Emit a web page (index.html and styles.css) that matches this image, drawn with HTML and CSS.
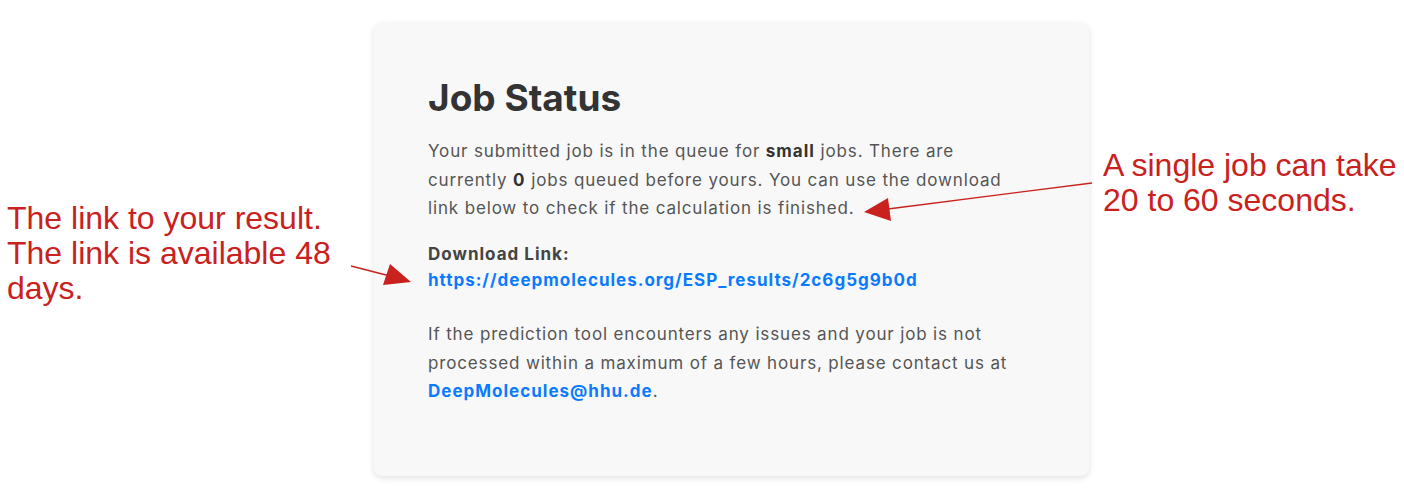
FILE: index.html
```html
<!DOCTYPE html>
<html lang="en">
<head>
<meta charset="utf-8">
<title>Job Status</title>
<link rel="stylesheet" href="styles.css">
</head>
<body>
<main class="page">
  <section class="card">
    <h1 class="title">Job Status</h1>
    <p class="text">Your submitted job is in the queue for <strong>small</strong> jobs. There are currently <strong>0</strong> jobs queued before yours. You can use the download link below to check if the calculation is finished.</p>
    <p class="download">
      <strong class="label">Download Link:</strong><br>
      <a class="link" href="#">https://deepmolecules.org/ESP_results/2c6g5g9b0d</a>
    </p>
    <p class="text">If the prediction tool encounters any issues and your job is not processed within a maximum of a few hours, please contact us at <a class="link" href="#">DeepMolecules@hhu.de</a>.</p>
  </section>
  <div class="note note-left">The link to your result.<br>The link is available 48<br>days.</div>
  <div class="note note-right">A single job can take<br>20 to 60 seconds.</div>
  <svg class="arrows" width="1404" height="493" viewBox="0 0 1404 493">
    <line x1="1092" y1="183" x2="888" y2="209" stroke="#c9211e" stroke-width="1.3"/>
    <polygon points="864,212 888,198 891,221" fill="#c9211e"/>
    <line x1="351" y1="266" x2="390" y2="276" stroke="#c9211e" stroke-width="1.3"/>
    <polygon points="411,282 390,264 383,285" fill="#c9211e"/>
  </svg>
</main>
</body>
</html>
```
FILE: styles.css
```css
* { box-sizing: border-box; }
html, body { margin: 0; padding: 0; background: #ffffff; }
.page {
  position: relative;
  width: 1404px;
  height: 493px;
  padding: 23px 0 0 374px;
}
.card {
  width: 715px;
  height: 453px;
  background: #f8f8f8;
  border-radius: 8px;
  box-shadow: 0 2px 6px rgba(0,0,0,0.12);
  padding: 55px 69px 0 54px;
  font-family: "Inter", "Open Sans", sans-serif;
  color: #555555;
  font-size: 17px;
  letter-spacing: 0.85px;
}
.title {
  margin: 0 0 19px 0;
  font-size: 37px;
  line-height: 40px;
  font-weight: 700;
  letter-spacing: 0;
  color: #333333;
}
.text {
  margin: 0;
  line-height: 28.5px;
}
.download {
  margin: 18.5px 0 27px 0;
  line-height: 26px;
}
.label { color: #444444; font-weight: 700; }
.link { color: #0a7bff; font-weight: 700; text-decoration: none; letter-spacing: 1px; }
strong { font-weight: 700; color: #333333; letter-spacing: 1px; }
.note {
  position: absolute;
  font-family: "Liberation Sans", Arial, sans-serif;
  color: #c9211e;
  font-size: 32px;
  line-height: 35px;
  letter-spacing: 0;
}
.note-left { left: 7px; top: 201px; }
.note-right { left: 1103px; top: 148px; }
.arrows { position: absolute; left: 0; top: 0; pointer-events: none; }
```
